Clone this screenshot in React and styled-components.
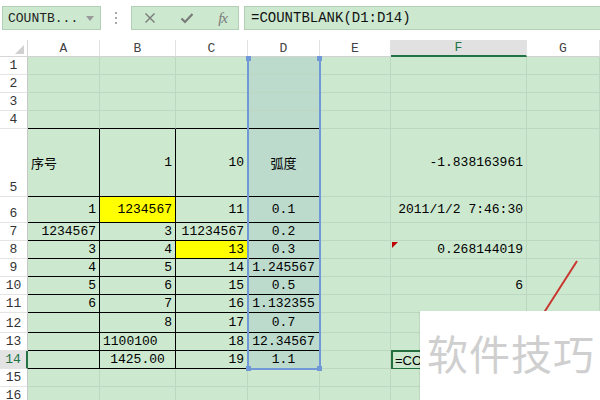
import React from 'react'
import styled, { createGlobalStyle, css } from 'styled-components'

const GREEN = '#cce8cf'
const TINT = '#bcdbcd'
const GRID = '#bed7c1'
const ACCENT = '#217346'
const BLUE = '#7097d6'
const MONO = `"Liberation Mono", "Noto Sans CJK SC", monospace`

const GlobalStyle = createGlobalStyle`
	html, body {
		margin: 0;
		padding: 0;
		background: #fff;
	}
	body {
		font-family: ${MONO};
	}
`

const Frame = styled.div`
	position: relative;
	width: 600px;
	height: 400px;
	overflow: hidden;
	background: #fff;
`

const Toolbar = styled.div`
	display: flex;
	align-items: center;
	height: 40px;
	padding: 0 0 4px 2px;
	box-sizing: border-box;
`

const NameBox = styled.div`
	display: flex;
	align-items: center;
	justify-content: space-between;
	width: 99px;
	height: 24px;
	box-sizing: border-box;
	padding: 0 6px 0 5px;
	background: ${GREEN};
	border: 1px solid #b3cfb6;
	font-size: 13px;
	color: #222;
`

const Dots = styled.div`
	display: flex;
	flex-direction: column;
	gap: 3px;
	margin: 0 14px 0 14px;

	span {
		width: 2px;
		height: 2px;
		background: #a8a8a8;
	}
`

const Actions = styled.div`
	display: flex;
	align-items: center;
	justify-content: space-between;
	width: 108px;
	height: 24px;
	box-sizing: border-box;
	padding: 0 11px 0 12px;
	background: ${GREEN};
	border: 1px solid #b3cfb6;
	margin-right: 5px;
`

const Fx = styled.span`
	font-family: "Liberation Serif", serif;
	font-style: italic;
	font-size: 15px;
	color: #7a7a7a;
	letter-spacing: -1px;
`

const FormulaBox = styled.div`
	flex: 1;
	display: flex;
	align-items: center;
	height: 24px;
	box-sizing: border-box;
	padding-left: 6px;
	background: ${GREEN};
	border: 1px solid #b3cfb6;
	border-right: none;
	font-size: 14px;
	color: #111;
`

const Sheet = styled.div`
	position: relative;
	display: grid;
	grid-template-columns: 28px 72px 76px 72px 72px 71px 136px 73px;
	grid-template-rows: 17px 18px 18px 18px 18px 68px 26px 18px 18px 18px 18px 18px 20px 18px 18px 18px 18px;
`

const Corner = styled.div`
	position: relative;
	border-right: 1px solid #d6d6d6;
	border-bottom: 1px solid #d6d6d6;

	&::after {
		content: '';
		position: absolute;
		right: 3px;
		bottom: 2px;
		border-left: 9px solid transparent;
		border-bottom: 9px solid #d0d0d0;
	}
`

const ColHeader = styled.div`
	display: flex;
	align-items: center;
	justify-content: center;
	box-sizing: border-box;
	font-size: 13px;
	color: #444;
	border-right: 1px solid #e2e2e2;
	border-bottom: 1px solid #d2d2d2;
	${p => p.$active && css`
		background: #e1e1e1;
		color: ${ACCENT};
		border-bottom: 2px solid ${ACCENT};
	`}
`

const RowHeader = styled.div`
	display: flex;
	align-items: flex-end;
	justify-content: center;
	box-sizing: border-box;
	padding-bottom: 1px;
	font-size: 13px;
	color: #333;
	border-right: 1px solid #c8c8c8;
	border-bottom: 1px solid #e4e4e4;
	${p => p.$active && css`
		background: #e3e3e3;
		color: ${ACCENT};
		border-right: 2px solid ${ACCENT};
	`}
`

const Cell = styled.div`
	position: relative;
	display: flex;
	align-items: center;
	justify-content: ${p => p.$align === 'left' ? 'flex-start' : p.$align === 'center' ? 'center' : 'flex-end'};
	box-sizing: border-box;
	padding: 0 3px 0 3px;
	white-space: nowrap;
	overflow: visible;
	font-size: 13px;
	color: #000;
	background: ${p => p.$bg};
	border-right: 1px solid ${p => p.$boxRight ? '#000' : GRID};
	border-bottom: 1px solid ${p => p.$boxBottom ? '#000' : GRID};
`

const EditBox = styled.div`
	position: absolute;
	left: 0;
	top: -1px;
	right: -1px;
	bottom: -2px;
	display: flex;
	align-items: center;
	padding-left: 2px;
	border: 2px solid #23703e;
	font-family: "Liberation Sans", sans-serif;
	font-size: 13px;
	color: #000;
`

const CommentMark = styled.span`
	position: absolute;
	left: 1px;
	top: 1px;
	border-top: 6px solid #c00000;
	border-right: 6px solid transparent;
`

const Selection = styled.div`
	position: absolute;
	left: 247px;
	top: 17px;
	width: 74px;
	height: 313px;
	box-sizing: border-box;
	border: 2px solid ${BLUE};
	border-top-width: 0;
	pointer-events: none;
`

const Handle = styled.span`
	position: absolute;
	width: 5px;
	height: 5px;
	background: ${BLUE};
	${p => p.$top ? 'top: -1px;' : 'bottom: -3px;'}
	${p => p.$left ? 'left: -3px;' : 'right: -3px;'}
`

const Watermark = styled.div`
	position: absolute;
	left: 420px;
	top: 311px;
	width: 180px;
	height: 89px;
	display: flex;
	align-items: center;
	padding: 0 0 8px 7px;
	box-sizing: border-box;
	background: #fff;
	box-shadow: -1px 0 1px rgba(0, 0, 0, 0.06);
	font-family: "Noto Sans CJK SC", sans-serif;
	font-size: 41px;
	color: #cfcfcf;
	letter-spacing: 1px;
`

const Stroke = styled.svg`
	position: absolute;
	left: 0;
	top: 0;
	pointer-events: none;
`

const COLS = ['A', 'B', 'C', 'D', 'E', 'F', 'G']

// row -> { col: [text, align] }
const DATA = {
	5: { A: ['序号', 'left'], B: ['1'], C: ['10'], D: ['弧度', 'center'], F: ['-1.838163961'] },
	6: { A: ['1'], B: ['1234567'], C: ['11'], D: ['0.1', 'center'], F: ['2011/1/2 7:46:30'] },
	7: { A: ['1234567'], B: ['3'], C: ['11234567'], D: ['0.2', 'center'] },
	8: { A: ['3'], B: ['4'], C: ['13'], D: ['0.3', 'center'], F: ['0.268144019'] },
	9: { A: ['4'], B: ['5'], C: ['14'], D: ['1.245567', 'center'] },
	10: { A: ['5'], B: ['6'], C: ['15'], D: ['0.5', 'center'], F: ['6'] },
	11: { A: ['6'], B: ['7'], C: ['16'], D: ['1.132355', 'center'] },
	12: { B: ['8'], C: ['17'], D: ['0.7', 'center'] },
	13: { B: ['1100100', 'left'], C: ['18'], D: ['12.34567', 'center'] },
	14: { B: ['1425.00', 'center'], C: ['19'], D: ['1.1', 'center'] },
}

const YELLOW = ['B6', 'C8']
const ROWS = Array.from({ length: 16 }, (_, i) => i + 1)

const inBox = (col, row) => ['A', 'B', 'C', 'D'].includes(col) && row >= 5 && row <= 14

const cellBg = (col, row) => {
	if (YELLOW.includes(col + row)) return '#ffff00'
	if (col === 'D' && row <= 14) return TINT
	return GREEN
}

const CloseIcon = () => (
	<svg width='12' height='12' viewBox='0 0 12 12'>
		<path d='M1.5 1.5 L10.5 10.5 M10.5 1.5 L1.5 10.5' stroke='#7a7a7a' strokeWidth='1.4' />
	</svg>
)

const CheckIcon = () => (
	<svg width='14' height='12' viewBox='0 0 14 12'>
		<path d='M1.5 6.5 L5 10 L12.5 2' stroke='#7a7a7a' strokeWidth='2.2' fill='none' />
	</svg>
)

const Caret = () => (
	<svg width='8' height='5' viewBox='0 0 8 5'>
		<path d='M0 0 H8 L4 5 Z' fill='#9a9a9a' />
	</svg>
)

const App = () => {
	return (
		<>
			<GlobalStyle />
			<Frame>
				<Toolbar>
					<NameBox>
						COUNTB...
						<Caret />
					</NameBox>
					<Dots>
						<span />
						<span />
						<span />
					</Dots>
					<Actions>
						<CloseIcon />
						<CheckIcon />
						<Fx>fx</Fx>
					</Actions>
					<FormulaBox>=COUNTBLANK(D1:D14)</FormulaBox>
				</Toolbar>

				<Sheet>
					<Corner />
					{COLS.map(col => (
						<ColHeader key={col} $active={col === 'F'}>
							{col}
						</ColHeader>
					))}

					{ROWS.map(row => (
						<React.Fragment key={row}>
							<RowHeader $active={row === 14}>{row}</RowHeader>
							{COLS.map(col => {
								const entry = DATA[row]?.[col]
								return (
									<Cell
										key={col + row}
										$align={entry?.[1]}
										$bg={cellBg(col, row)}
										$boxRight={inBox(col, row)}
										$boxBottom={inBox(col, row) || (row === 4 && ['A', 'B', 'C', 'D'].includes(col))}
									>
										{col === 'F' && row === 8 ? <CommentMark /> : null}
										{col === 'F' && row === 14 ? <EditBox>=COU</EditBox> : entry?.[0]}
									</Cell>
								)
							})}
						</React.Fragment>
					))}

					<Selection>
						<Handle $top $left />
						<Handle $top />
						<Handle $left />
						<Handle />
					</Selection>
				</Sheet>

				<Stroke width='600' height='400'>
					<line x1='577' y1='261' x2='538' y2='322' stroke='#c9362f' strokeWidth='2' />
				</Stroke>

				<Watermark>软件技巧</Watermark>
			</Frame>
		</>
	)
}

export default App
